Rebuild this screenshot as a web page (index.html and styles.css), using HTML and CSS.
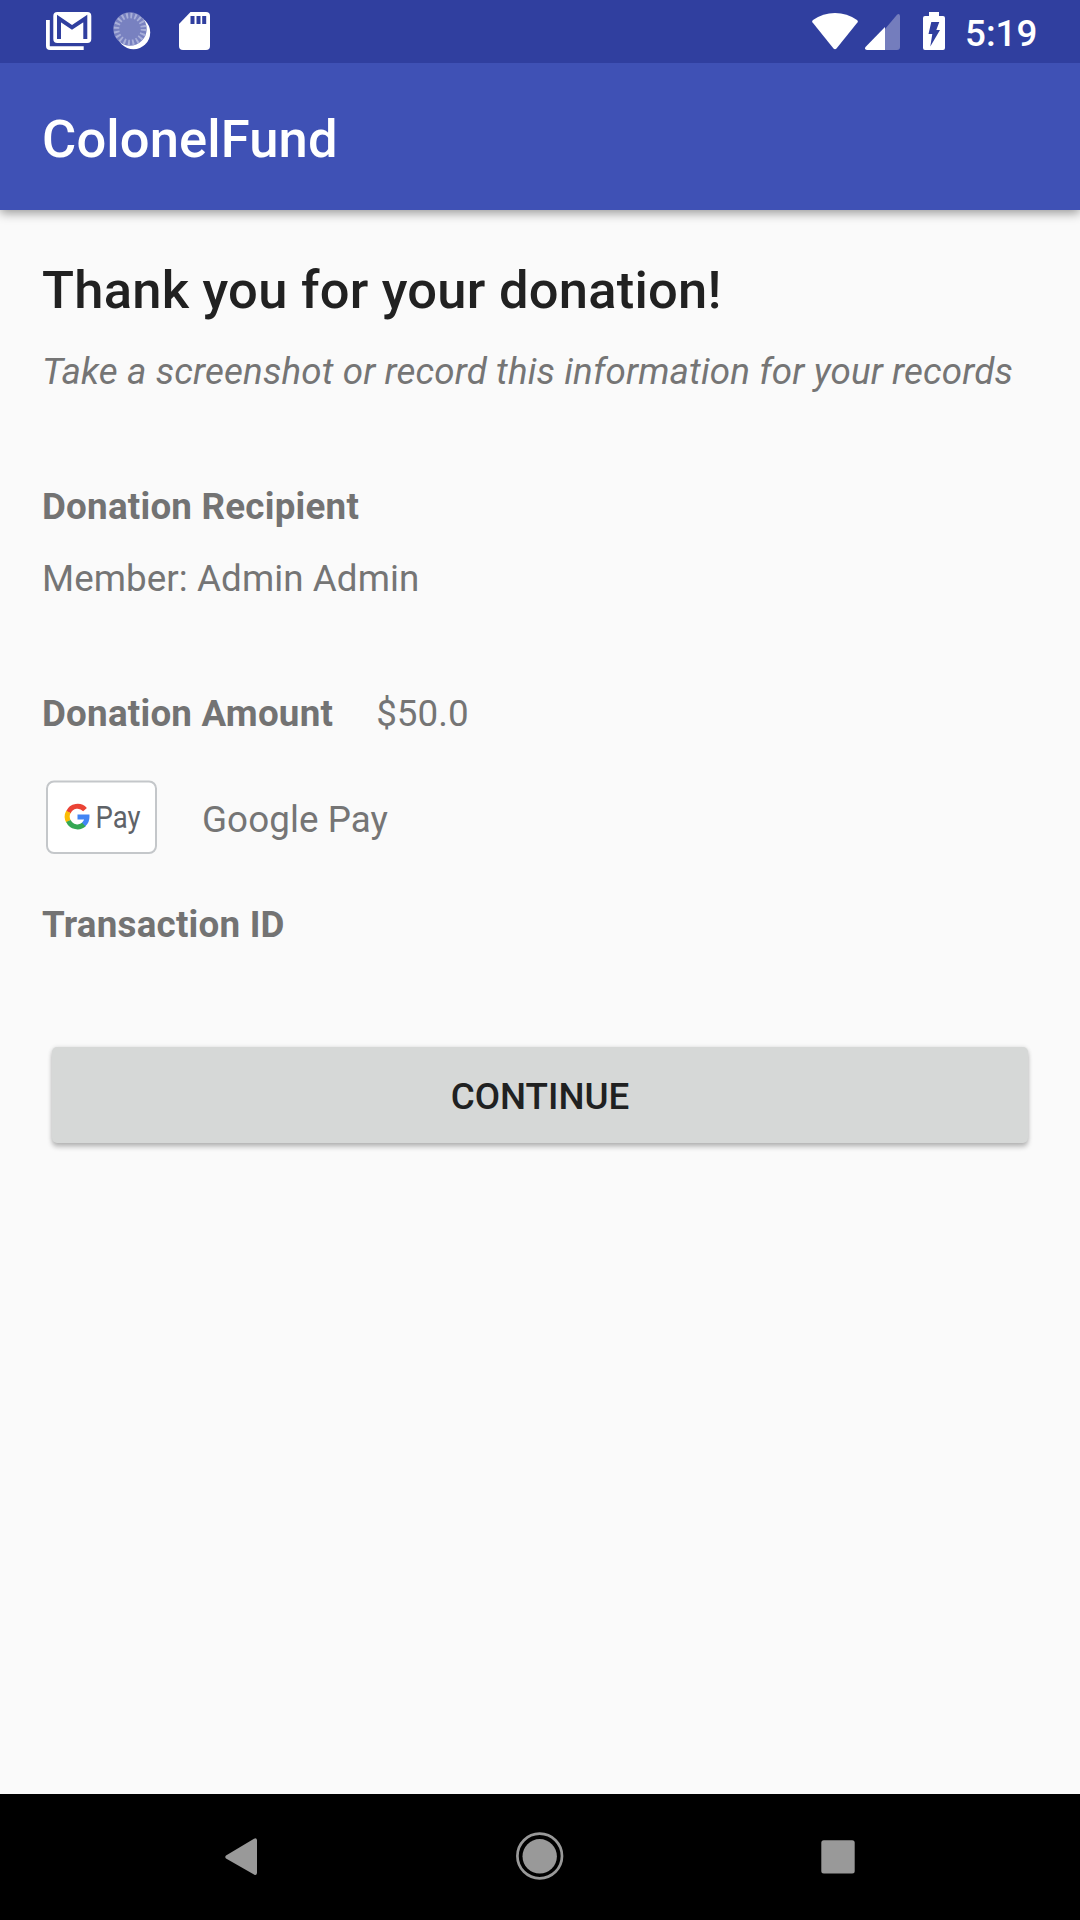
FILE: index.html
```html
<!DOCTYPE html>
<html lang="en">
<head>
<meta charset="utf-8">
<title>ColonelFund</title>
<link rel="stylesheet" href="styles.css">
</head>
<body>
<div class="screen">
  <header class="status-bar">
    <div class="notifications">
      <svg class="icon-mail" width="46" height="39" viewBox="0 0 46 39">
        <path d="M1.900 8v26q0 2.200 2.200 2.200H37.700" fill="none" stroke="#fff" stroke-width="3.800"/>
        <rect x="7.300" y="0" width="38" height="31" rx="4" fill="#fff"/>
        <path d="M13 27V6.500L26 15.300 39.300 6.500V27" fill="none" stroke="#303f9f" stroke-width="4"/>
      </svg>
      <svg class="icon-sync" width="38" height="38" viewBox="0 0 38 38">
        <circle cx="20.500" cy="20.500" r="16.700" fill="#fff"/>
        <circle cx="17" cy="17" r="16.700" fill="#7881c0"/>
        <circle cx="17" cy="17" r="13.500" fill="none" stroke="#a8afd9" stroke-width="5.500" stroke-dasharray="1.900 2.341"/>
      </svg>
      <svg class="icon-sd" width="31" height="39" viewBox="0 0 31 39">
        <path d="M11.500 0H27q4 0 4 4v30q0 4-4 4H4q-4 0-4-4V12z" fill="#fff"/>
        <path d="M11.500 4h4v8h-4zM17.500 4h4v8h-4zM23.200 4h4v8h-4z" fill="#303f9f"/>
      </svg>
    </div>
    <div class="system">
      <svg class="icon-wifi" width="46" height="37" viewBox="0 0 46 37">
        <path d="M.4 9.300Q-.3 8 1 7Q11 0 23 0T45 7q1.300 1 .6 2.300L24.500 35.500q-1.500 1.500-3 0z" fill="#fff"/>
      </svg>
      <svg class="icon-signal" width="36" height="36" viewBox="0 0 36 36">
        <path d="M20 15 32 .8q2.500-1.800 3 1V33q0 3-3 3H20z" fill="#747dbd"/>
        <path d="M20 13v23H2q-3-.5-1.500-3z" fill="#fff"/>
      </svg>
      <svg class="icon-battery" width="22" height="38" viewBox="0 0 22 38">
        <path d="M6 0h10v4h4q2 0 2 2v30q0 2-2 2H2q-2 0-2-2V6q0-2 2-2h4z" fill="#fff"/>
        <path d="M8.300 10h8l-3 8H17L7.300 34.500 9.300 22H5.500z" fill="#303f9f"/>
      </svg>
      <span class="clock">5:19</span>
    </div>
  </header>
  <div class="app-bar"><h1 class="app-title">ColonelFund</h1></div>
  <main class="content">
    <h2 class="headline">Thank you for your donation!</h2>
    <p class="hint">Take a screenshot or record this information for your records</p>
    <p class="label recipient">Donation Recipient</p>
    <p class="value member">Member: Admin Admin</p>
    <div class="amount-row"><span class="label">Donation Amount</span><span class="value">$50.0</span></div>
    <div class="method-row">
      <svg width="112" height="75" viewBox="0 0 112 75">
        <rect x="1" y="1.500" width="109" height="71.500" rx="7" fill="#fff" stroke="#c4c7ca" stroke-width="2"/>
        <g fill="none" stroke-width="5">
          <path d="M22.400 32.200A10 10 0 0 1 39 29.600" stroke="#ea4335"/>
          <path d="M22.400 41.200A10 10 0 0 1 22.400 31.800" stroke="#fbbc04"/>
          <path d="M38.300 44.200A10 10 0 0 1 22.400 41" stroke="#34a853"/>
          <path d="M31.500 36.900H41A10 10 0 0 1 37.700 44.500" stroke="#4285f4"/>
        </g>
        <text class="pay-word" x="49.500" y="48" textLength="45" lengthAdjust="spacingAndGlyphs">Pay</text>
      </svg>
      <span class="value method-name">Google Pay</span>
    </div>
    <p class="label transaction">Transaction ID</p>
    <button class="continue" type="button">CONTINUE</button>
  </main>
  <nav class="nav-bar">
    <svg class="nav-back" width="32" height="37" viewBox="0 0 32 37"><path d="M29 .7q2.500-1.500 3 1.300v33q-.5 3-3 1.500L1 20.500q-1.500-1.500 0-3z" fill="#999"/></svg>
    <svg class="nav-home" width="48" height="48" viewBox="0 0 48 48"><circle cx="23.700" cy="24" r="22.300" fill="none" stroke="#999" stroke-width="2.700"/><circle cx="23.700" cy="24.300" r="17.200" fill="#999"/></svg>
    <svg class="nav-recents" width="34" height="34" viewBox="0 0 34 34"><rect x=".3" y=".3" width="33.400" height="33.200" rx="2.500" fill="#999"/></svg>
  </nav>
</div>
</body>
</html>
```
FILE: styles.css
```css
* { box-sizing: border-box; }
body { margin: 0; font-family: Roboto, sans-serif; background: #fafafa; }
h1, h2, p { margin: 0; }
svg { display: block; flex: none; }
.screen { width: 1080px; height: 1920px; display: flex; flex-direction: column; overflow: hidden; }
.status-bar { position: relative; z-index: 1; height: 63px; flex: none; background: #303f9f; display: flex; justify-content: space-between; padding: 12px 43px 0 46px; }
.notifications, .system { display: flex; align-items: flex-start; }
.icon-sync { margin-left: 20.500px; }
.icon-sd { margin-left: 28.500px; }
.icon-wifi { margin-top: 1px; }
.icon-signal { margin: 2px 0 0 7px; }
.icon-battery { margin-left: 22px; }
.clock { width: 72px; margin-left: 20px; font-size: 36.750px; line-height: 44px; font-weight: 500; color: #fff; white-space: nowrap; }
.app-bar { height: 147px; flex: none; background: #3f51b5; padding: 0 42px; display: flex; align-items: center; box-shadow: 0 3px 10px rgba(0,0,0,.4); }
.app-title { font-size: 52.500px; font-weight: 500; line-height: 62px; letter-spacing: .12px; color: #fff; padding-top: 5px; }
.content { flex: 1; padding: 49px 42px 0; display: flex; flex-direction: column; }
.headline { font-size: 52.500px; font-weight: 500; line-height: 62px; letter-spacing: .24px; color: #212121; }
.label, .value, .hint { font-size: 36.750px; line-height: 43px; color: #757575; white-space: nowrap; }
.value { letter-spacing: .08px; }
.label { font-weight: 700; letter-spacing: .22px; color: #737373; }
.hint { font-style: italic; letter-spacing: .15px; margin-top: 29px; }
.recipient { margin-top: 92px; }
.member { margin-top: 29px; }
.amount-row { display: flex; gap: 43px; margin-top: 92px; }
.method-row { display: flex; align-items: center; gap: 44px; margin: 45px 0 0 4px; height: 75px; }
.method-name { padding-top: 3px; }
.pay-word { font-family: Roboto, sans-serif; font-size: 31.500px; fill: #5f6368; }
.transaction { margin-top: 48px; }
.continue { margin: 101px 10px 0; height: 96px; border: 0; border-radius: 5px; background: #d6d8d7; color: #202121; font: 500 36.750px/43px Roboto, sans-serif; padding: 2px 0 0; box-shadow: 0 4px 5px rgba(0,0,0,.24), 0 0 4px rgba(0,0,0,.12); }
.nav-bar { height: 126px; flex: none; background: #000; display: flex; align-items: flex-start; padding: 0 225px; }
.nav-back { margin-top: 44px; }
.nav-home { margin: 38px 0 0 259px; }
.nav-recents { margin: 46px 0 0 257px; }
```
